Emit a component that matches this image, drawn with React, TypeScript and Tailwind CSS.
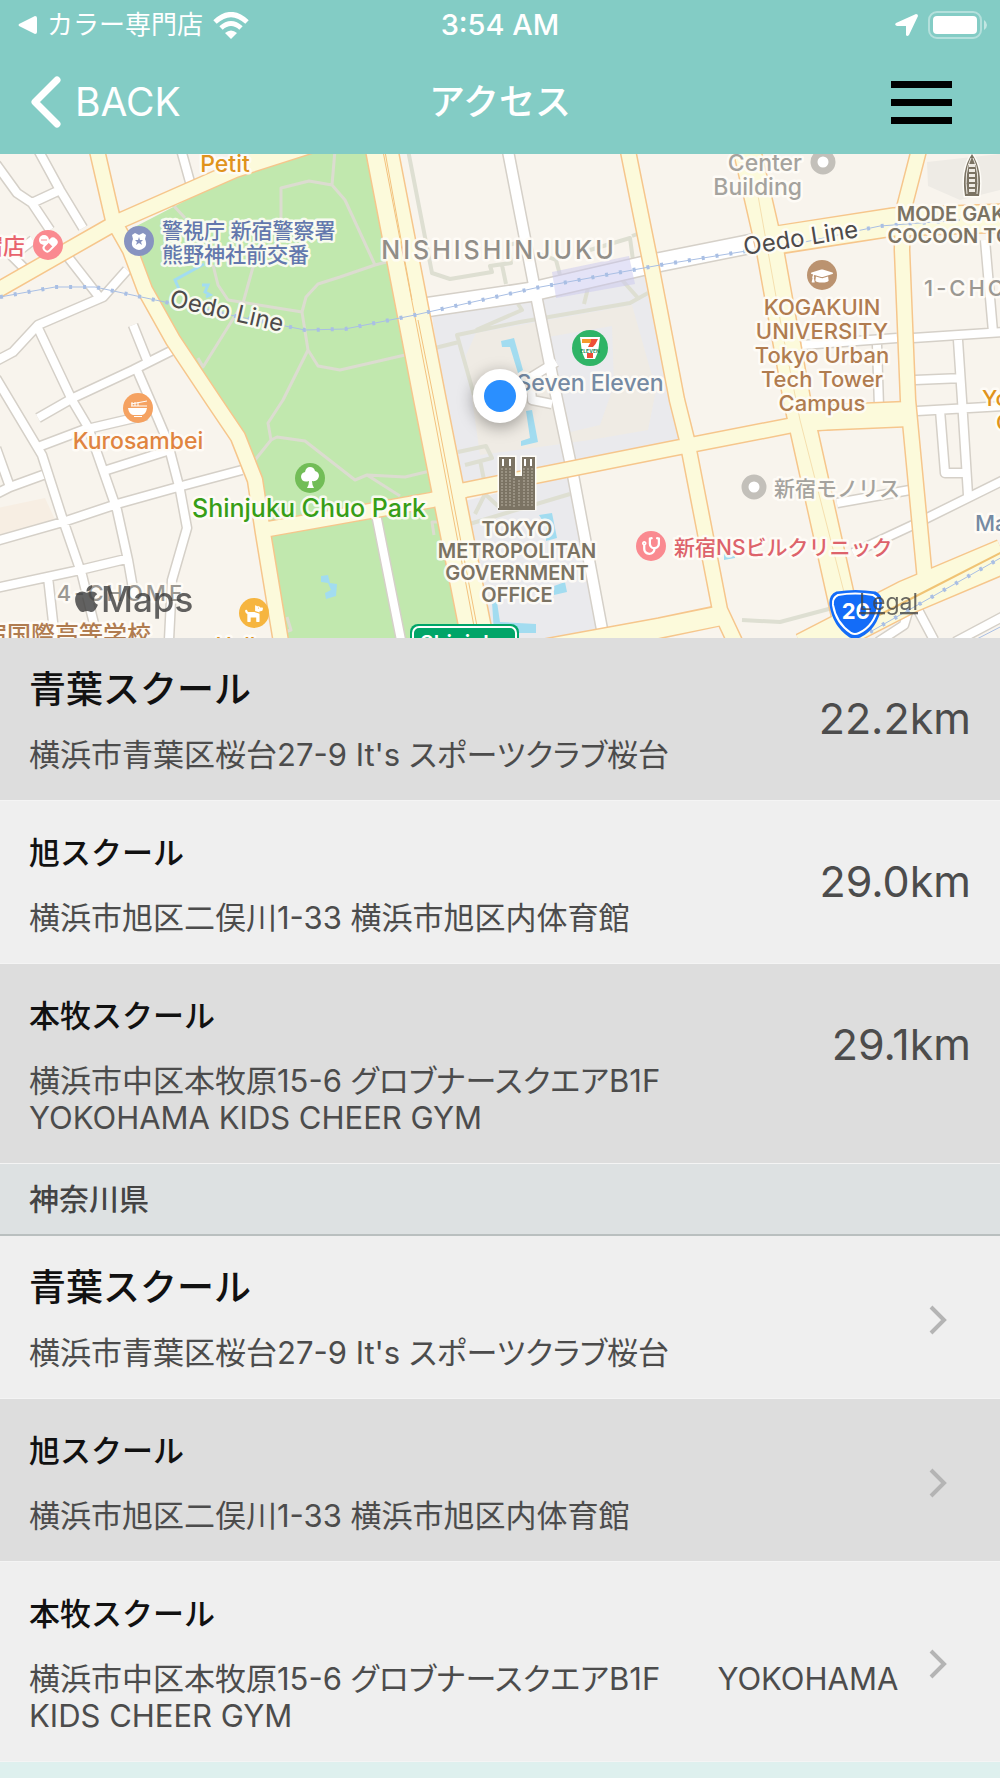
import { FaApple, FaCapsules, FaDog, FaGraduationCap, FaStethoscope } from 'react-icons/fa'
import type { ReactNode } from 'react'

type School = {
  name: string
  address: string
  distance?: string
  large?: boolean
}

const NEARBY: School[] = [
  { name: '青葉スクール', address: "横浜市青葉区桜台27-9 It's スポーツクラブ桜台", distance: '22.2km', large: true },
  { name: '旭スクール', address: '横浜市旭区二俣川1-33 横浜市旭区内体育館', distance: '29.0km' },
  { name: '本牧スクール', address: '横浜市中区本牧原15-6 グロブナースクエアB1F\nYOKOHAMA KIDS CHEER GYM', distance: '29.1km' },
]

const KANAGAWA: School[] = [
  { name: '青葉スクール', address: "横浜市青葉区桜台27-9 It's スポーツクラブ桜台", large: true },
  { name: '旭スクール', address: '横浜市旭区二俣川1-33 横浜市旭区内体育館' },
  { name: '本牧スクール', address: '横浜市中区本牧原15-6 グロブナースクエアB1F\u3000   YOKOHAMA KIDS CHEER GYM' },
]

export default function App() {
  return (
    <div className="min-h-screen bg-[#def0ee] font-[Inter,'Noto_Sans_CJK_JP',sans-serif]">
      <header className="bg-[#83ccc5] text-white">
        <StatusBar />
        <nav className="grid h-[108px] grid-cols-[1fr_auto_1fr] items-center px-[30px] pt-1">
          <button type="button" className="flex items-center gap-[14px] justify-self-start text-[39px] leading-[52px]">
            <svg width="31" height="52" viewBox="0 0 31 52" fill="none" aria-hidden="true">
              <path d="M27 4 L5 26 L27 48" stroke="currentColor" strokeWidth="7" strokeLinecap="round" strokeLinejoin="round" />
            </svg>
            <span>BACK</span>
          </button>
          <h1 className="text-[36px] leading-[52px] font-medium">アクセス</h1>
          <button type="button" aria-label="メニュー" className="mr-[18px] flex flex-col gap-[11px] justify-self-end">
            <span className="h-[7px] w-[61px] bg-black" />
            <span className="h-[7px] w-[61px] bg-black" />
            <span className="h-[7px] w-[61px] bg-black" />
          </button>
        </nav>
      </header>

      <AreaMap />

      <main>
        <ul>
          {NEARBY.map((school, i) => (
            <SchoolRow key={school.name} school={school} dark={i % 2 === 0} />
          ))}
        </ul>
        <h2 className="border-b-2 border-[#b9bfbf] bg-[#dde1e2] px-[29px] py-[15px] text-[30px] leading-10 font-medium text-[#444]">
          神奈川県
        </h2>
        <ul>
          {KANAGAWA.map((school, i) => (
            <SchoolRow key={school.name} school={school} dark={i % 2 === 1} />
          ))}
        </ul>
      </main>
    </div>
  )
}

function StatusBar() {
  return (
    <div className="grid h-[46px] grid-cols-[1fr_auto_1fr] items-center px-3 pt-1">
      <div className="ml-[6px] flex items-center gap-[10px]">
        <svg width="19" height="18" viewBox="0 0 19 18" fill="currentColor" aria-hidden="true">
          <path d="M1 8 Q0 9 1 10 L17 18 Q19 18 19 16 V2 Q19 0 17 0 Z" />
        </svg>
        <span className="text-[26px] leading-9">カラー専門店</span>
        <svg width="36" height="27" viewBox="0 0 36 27" fill="none" stroke="currentColor" aria-hidden="true">
          <path d="M2 10 Q18 -5 34 10" strokeWidth="5" />
          <path d="M8 16 Q18 7 28 16" strokeWidth="5" />
          <path d="M12 21 Q18 16 24 21 L18 27 Z" fill="currentColor" stroke="none" />
        </svg>
      </div>
      <span className="text-[29px] leading-9 font-medium">3:54 AM</span>
      <div className="flex items-center gap-[10px] justify-self-end">
        <svg width="23" height="23" viewBox="0 0 23 23" fill="currentColor" aria-hidden="true">
          <path d="M21 0 Q23 0 23 2 L14 21 Q12 23 11 21 V12 H2 Q-1 11 1 9 Z" />
        </svg>
        <svg width="60" height="28" viewBox="0 0 60 28" aria-hidden="true">
          <rect x="1" y="1" width="52" height="26" rx="8" fill="none" stroke="#fff" strokeWidth="2" opacity=".4" />
          <rect x="5" y="5" width="44" height="18" rx="4" fill="#fff" />
          <path d="M56 9 Q59 11 59 14 Q59 17 56 19 Z" fill="#fff" opacity=".5" />
        </svg>
      </div>
    </div>
  )
}

function SchoolRow({ school, dark }: { school: School; dark: boolean }) {
  return (
    <li className={dark ? 'border-b border-[#f4f4f4] bg-[#ddd]' : 'border-b border-[#f4f4f4] bg-[#efefef]'}>
      <a href="#school" className="flex items-center justify-between px-[29px] pt-8 pb-[27px]">
        <div>
          <h3 className={school.large ? 'text-[37px] leading-10 font-medium text-[#111]' : 'text-[31px] leading-10 font-medium text-[#111]'}>
            {school.name}
          </h3>
          <p className="mt-[26px] text-[31px] leading-[37px] whitespace-pre-wrap text-[#4c4c4c] [font-feature-settings:'palt']">
            {school.address}
          </p>
        </div>
        {school.distance ? (
          <span className="mt-6 self-start text-[43px] leading-12 text-[#4c4c4c]">{school.distance}</span>
        ) : (
          <svg width="18" height="30" viewBox="0 0 18 30" fill="none" className="mr-6 shrink-0" aria-hidden="true">
            <path d="M2 2 L15 15 L2 28" stroke="#b4b4b4" strokeWidth="4" />
          </svg>
        )}
      </a>
    </li>
  )
}

/* ---------- map ---------- */

const STREETS = [
  'M36 146 L60 190 L83 228 M68 257 L100 298',
  'M-4 164 L17 193 L32 203 L60 190 M32 203 L50 230',
  'M33 240 L12 256 L24 268',
  'M127 270 L103 297 L38 325 L13 352 L-4 361',
  'M38 328 L72 400 L88 427 L103 470 L117 510 L128 560 L135 600',
  'M133 325 L147 360 M173 350 L133 370 L73 398 L38 418',
  'M137 370 L150 400 L167 440 L180 490 L187 528 L172 580 L169 640',
  'M-4 378 L42 455 L63 520 L82 575 L98 640',
  'M-4 494 L10 487 L43 475 M-4 448 L10 487',
  'M38 447 L83 430 L147 415 M107 470 L170 450',
  'M-4 541 L63 522 L117 504 L178 487 L242 470',
  'M-4 588 L80 570 L130 558 M48 577 L55 640',
  'M180 146 L190 182',
  'M376 514 L401 640',
  'M985 240 L993 332',
  'M802 345 L897 338 M913 338 L1004 332 M877 345 L879 407',
  'M958 340 L962 400 L968 495 M915 380 L963 378',
  'M917 411 L1004 406 M940 410 L945 473 L970 473',
  'M837 503 L910 490 M853 553 L913 525 L1004 480',
  'M917 608 L934 640 M955 642 L1004 616 M878 642 L904 625 L910 605',
  'M556 362 L530 378 L532 400 L552 404',
]

const WIDE_STREETS = ['M428 307 L530 292 L660 262 L760 242']

const MAIN_STREETS = ['M507 146 L535 290 L555 390 L573 475 L604 640']

const PARK_PATHS = [
  'M173 205 L185 218 M213 265 L218 285 L228 300 L302 312 M253 267 L243 303 L203 367 L198 358',
  'M281 220 L281 188 L309 181 L332 185 L345 200 L375 265 M332 185 L335 150',
  'M340 277 L318 284 L306 297 L302 312 L308 350 L318 366 L340 370 L405 355',
  'M308 350 L283 400 L268 423 L271 440 L255 460 M271 440 L277 437 L305 441 L355 480 L367 475 L400 496 M367 475 L405 477 L430 471',
  'M375 265 L340 277 M375 265 L390 261 M440 522 L432 522 L434 535 M287 617 L291 630 L285 632',
]

const FOOTWAYS = [
  'M408 150 L432 273 L450 279 L492 272 L490 266 L511 263 L508 245 L530 240 M502 265 L506 284',
  'M540 254 L556 260 L560 275 M590 250 L630 238 L633 260 M632 236 L640 233',
  'M435 348 L459 342 L457 335 L520 322 L630 303 L648 293 M459 342 L474 395 M476 330 L522 310 L518 304',
  'M590 280 L584 304 M622 280 L638 298',
  'M458 452 L486 446 L492 458 L465 465 M480 460 L484 480 L460 490 M475 514 L485 494 L500 508 M456 528 L570 494',
  'M742 620 L780 622 L840 606',
]

const MINOR_YELLOW = [
  'M96 146 L113 220 L130 250 L145 290 L173 340 L213 400 L238 437 L255 480 L263 533 L281 642',
  'M-4 291 L117 222 L235 170 L310 146',
  'M263 530 L432 500 L465 490 L670 449 L793 425 L850 420',
  'M627 146 L652 270 L677 400 L687 440 L720 610 L735 642',
  'M920 146 L903 212 L902 250 L908 400 L925 580',
]

function Roads({ lines, color, width }: { lines: string[]; color: string; width: number }) {
  return <path d={lines.join(' ')} fill="none" stroke={color} strokeWidth={width} strokeLinejoin="round" />
}

type LabelProps = {
  x: number
  y: number
  lines: string[]
  color: string
  size?: number
  leading?: number
  anchor?: 'start' | 'middle' | 'end'
  weight?: number
  rotate?: number
}

function Label({ x, y, lines, color, size = 22, leading = 24, anchor = 'middle', weight = 500, rotate = 0 }: LabelProps) {
  return (
    <text
      fill={color}
      stroke="#fffdf8"
      strokeOpacity=".9"
      strokeWidth="5"
      strokeLinejoin="round"
      fontSize={size}
      fontWeight={weight}
      textAnchor={anchor}
      transform={`rotate(${rotate} ${x} ${y})`}
      className="[paint-order:stroke]"
    >
      {lines.map((line, i) => (
        <tspan key={line} x={x} y={y + i * leading}>
          {line}
        </tspan>
      ))}
    </text>
  )
}

function Pin({ x, y, color, children }: { x: number; y: number; color: string; children?: ReactNode }) {
  return (
    <g transform={`translate(${x} ${y})`}>
      <circle r="15" fill={color} />
      {children}
    </g>
  )
}

function AreaMap() {
  return (
    <svg
      viewBox="0 154 1000 484"
      preserveAspectRatio="xMidYMid slice"
      className="block h-[484px] w-full bg-[#f8f4ed]"
      role="group"
      aria-label="現在地周辺の地図"
    >
      {/* land */}
      <path d="M125 232 L233 176 L305 150 L370 150 L415 390 L465 640 H282 L263 533 L255 480 L238 437 L213 400 L150 290 Z" fill="#c1e8ae" />
      <path d="M-2 508 L45 498 L58 526 L-2 538 Z" fill="#f7eee3" />
      <path d="M432 315 L650 275 L690 440 L455 488 Z M460 502 L576 475 L606 640 L490 640 Z" fill="#eaeaed" />
      <path d="M466 355 L476 333 L632 305 L656 390 L648 430 L590 440 L480 455 Z" fill="#efebe4" />
      <path d="M548 337 L612 326 L614 385 L600 425 L562 434 Z" fill="#eaeaed" />
      <path d="M927 162 L1000 154 V190 L960 200 L928 186 Z" fill="#eeebe5" />

      {/* water */}
      <g fill="#a2dcf0">
        <path d="M501 341 L514 338 L523 370 L518 373 L510 347 L502 347 Z" />
        <path d="M526 411 L532 410 L538 442 L521 446 L521 441 L530 438 Z" />
        <path d="M539 515 L552 513 L557 538 L546 541 L546 526 Z M565 582 L567 592 L554 595 L554 586 Z" />
        <path d="M492 602 L497 602 L500 622 L536 624 L536 633 L494 633 Z" />
        <path d="M321 576 L328 575 L330 583 L337 584 L336 596 L326 599 L325 593 L331 590 L328 583 L321 582 Z" />
        <path d="M724 552 L735 553 V558 L724 560 Z" />
      </g>
      <path d="M204 264 L175 280 L179 289 M202 285 L208 285 L205 292 L210 295 L206 297" fill="none" stroke="#a2dcf0" strokeWidth="3" />

      {/* paths and streets */}
      <Roads lines={PARK_PATHS} color="#dcdcd0" width={3} />
      <Roads lines={FOOTWAYS} color="#dedfd2" width={4} />
      <Roads lines={STREETS} color="#d5d0c8" width={11} />
      <Roads lines={MAIN_STREETS} color="#d5d0c8" width={13} />
      <Roads lines={WIDE_STREETS} color="#d5d0c8" width={21} />
      <Roads lines={STREETS} color="#fff" width={8} />
      <Roads lines={MAIN_STREETS} color="#fff" width={10} />
      <Roads lines={WIDE_STREETS} color="#fff" width={18} />
      <path d="M552 272 L629 256 L635 284 L556 298 Z" fill="#c9c8f0" opacity=".5" />

      {/* arterial roads */}
      <g fill="none" stroke="#f6c68c" strokeLinejoin="round">
        <path d={MINOR_YELLOW.join(' ')} strokeWidth="17" />
        <path d="M381 146 L430 400 L478 642" strokeWidth="34" />
        <path d="M746 146 L770 250 L797 400 L851 642" strokeWidth="29" />
        <path d="M778 240 L893 222 L1004 218" strokeWidth="30" />
        <path d="M790 419 L908 414" strokeWidth="27" />
        <path d="M540 650 L660 628 L722 615" strokeWidth="22" />
        <path d="M804 650 L907 597 L1004 556" strokeWidth="36" />
      </g>
      <path d="M205 178 L255 152 H312 L260 166 Z" fill="#fcfadb" />
      <g fill="none" stroke="#fcfadb" strokeLinejoin="round">
        <path d={MINOR_YELLOW.join(' ')} strokeWidth="14" />
        <path d="M381 146 L430 400 L478 642" strokeWidth="31" />
        <path d="M746 146 L770 250 L797 400 L851 642" strokeWidth="26" />
        <path d="M776 240 L893 222 L1004 218" strokeWidth="27" />
        <path d="M788 419 L909 414" strokeWidth="24" />
        <path d="M540 650 L660 628 L724 615" strokeWidth="19" />
        <path d="M804 650 L907 597 L1004 556" strokeWidth="33" />
      </g>
      <path d="M382 146 L431 400 L477 642 M384 146 L412 300 M418 320 L434 400 L480 642" fill="none" stroke="#f3c27e" strokeWidth="1" />
      <path d="M757 190 L782 330 L800 420 L846 600" fill="none" stroke="#f5dfae" strokeWidth="1" />
      <path d="M850 630 L930 589 L1004 551" fill="none" stroke="#f0c374" strokeWidth="2" />

      {/* subway */}
      <g fill="none" stroke="#a9bfe4">
        <path
          d="M0 297 L55 287 L95 287 L160 301 L230 315 L305 330 L345 329 L415 315 L535 288 L660 265 L740 252 L800 243 L880 226 L960 220 M870 632 L1004 556 M975 640 L1004 625"
          strokeWidth="1"
        />
        <path
          d="M0 297 L55 287 L95 287 L160 301 L230 315 L305 330 L345 329 L415 315 L535 288 L660 265 L740 252 L800 243 L880 226 L960 220 M870 632 L1004 556"
          strokeWidth="4"
          strokeDasharray="3 11"
        />
      </g>

      {/* labels */}
      <g>
        <Label x={225} y={172} lines={['Petit']} color="#e0931c" size={23} />
        <Label x={25} y={254} lines={['新宿店']} color="#e8636c" anchor="end" size={22} />
        <Label x={162} y={238} lines={['警視庁 新宿警察署', '熊野神社前交番']} color="#6378ad" anchor="start" size={21} />
        <g letterSpacing="3">
          <Label x={499} y={259} lines={['NISHISHINJUKU']} color="#918e88" size={25} />
          <Label x={924} y={296} lines={['1-CHOME']} color="#9b9892" anchor="start" />
          <Label x={121} y={601} lines={['4-CHOME']} color="#9b9892" />
        </g>
        <Label x={225} y={319} lines={['Oedo Line']} color="#4d4a4a" size={24} weight={400} rotate={13} />
        <Label x={802} y={246} lines={['Oedo Line']} color="#4d4a4a" size={24} weight={400} rotate={-9} />
        <Label x={802} y={171} lines={['Center', 'Building']} color="#a5a39e" anchor="end" size={23} />
        <Label x={972} y={221} lines={['MODE GAKUEN', 'COCOON TOWER']} color="#7b7363" size={20} leading={22} weight={600} />
        <Label x={822} y={315} lines={['KOGAKUIN', 'UNIVERSITY', 'Tokyo Urban', 'Tech Tower', 'Campus']} color="#b07c50" />
        <Label x={590} y={391} lines={['Seven Eleven']} color="#758aa3" size={23} />
        <Label x={138} y={449} lines={['Kurosambei']} color="#e0843f" size={23} />
        <Label x={309} y={517} lines={['Shinjuku Chuo Park']} color="#379e17" size={25} />
        <Label x={517} y={536} lines={['TOKYO', 'METROPOLITAN', 'GOVERNMENT', 'OFFICE']} color="#7b7363" size={20} leading={22} weight={600} />
        <Label x={774} y={496} lines={['新宿モノリス']} color="#a5a39e" anchor="start" size={21} />
        <Label x={674} y={555} lines={['新宿NSビルクリニック']} color="#dd636b" anchor="start" size={21} />
        <Label x={975} y={531} lines={['Manpuku']} color="#758aa3" anchor="start" />
        <Label x={982} y={406} lines={['Yoshinoya']} color="#e0931c" anchor="start" />
        <Label x={996} y={430} lines={['Grill']} color="#e0931c" anchor="start" />
        <Label x={151} y={643} lines={['新宿国際高等学校']} color="#b07c50" anchor="end" size={24} />
        <Label x={242} y={653} lines={['Hallo']} color="#e0931c" />
      </g>

      {/* points of interest */}
      <Pin x={48} y={245} color="#fa8a90">
        <g transform="rotate(45)">
          <rect x="-2" y="-9" width="7" height="15" rx="3" fill="none" stroke="#fff" strokeWidth="2" />
          <path d="M-2 -2 H5 V-6 Q5 -9 2 -9 Q-2 -9 -2 -6 Z" fill="#fff" />
        </g>
        <circle cx="-4" cy="-5" r="5" fill="#fff" />
        <path d="M-7 -5 H-1" stroke="#fa8a90" strokeWidth="1" />
      </Pin>
      <Pin x={139} y={241} color="#8793c0">
        <path d="M-7 -6 L-4 -8 L0 -6 L4 -8 L7 -6 L6 -2 Q10 7 0 9 Q-10 7 -6 -2 Z" fill="#fff" />
        <path d="M0 -4 L1 -1 H4 L2 1 L3 4 L0 2 L-3 4 L-2 1 L-4 -1 H-1 Z" fill="#8793c0" />
      </Pin>
      <Pin x={138} y={408} color="#f5a261">
        <path d="M-10 0 H9 Q8 6 4 7 H-5 Q-9 6 -10 0 Z M-4 8 H4 V9 H-4 Z" fill="#fff" />
        <path d="M-7 -4 L9 -7 M-7 -2 H9 M-6 -6 V-2 M-3 -6 V-2 M0 -6 V-2" stroke="#fff" strokeWidth="1" />
      </Pin>
      <Pin x={310} y={478} color="#72bd57">
        <path d="M-3 10 Q-1 7 -1 3 Q-8 5 -9 -1 Q-9 -5 -5 -6 Q-4 -11 0 -11 Q4 -11 5 -7 Q9 -6 9 -2 Q8 4 2 3 Q2 7 4 10 Z" fill="#fff" />
      </Pin>
      <Pin x={254} y={613} color="#f6b53f">
        <FaDog x={-10} y={-10} size={20} color="#fff" />
      </Pin>
      <Pin x={822} y={275} color="#bb9370">
        <FaGraduationCap x={-11} y={-10} size={22} color="#fff" />
      </Pin>
      <Pin x={651} y={546} color="#fa8a90">
        <g transform="scale(-1 1)">
          <FaStethoscope x={-9} y={-9} size={18} color="#fff" />
        </g>
      </Pin>
      <g fill="#fff" stroke="#c3c0ba" strokeWidth="7">
        <circle cx="823" cy="162" r="9" />
        <circle cx="754" cy="487" r="9" />
      </g>
      <circle cx="590" cy="348" r="18" fill="#2fb466" />
      <path d="M580 337 H600 L598 352 L595 359 H585 L582 352 Z" fill="#fff" />
      <path d="M582 339 H592 V343 H582 Z" fill="#f49a2b" />
      <path d="M591 339 H598 Q596 344 593 347 H588 Q589 344 591 342 Z M587 353 H593 V358 H587 Z" fill="#ee4f37" />
      <text x="590" y="353" fontSize="5" fontWeight="700" textAnchor="middle" fill="#168c54">ELEVEN</text>

      {/* landmark buildings */}
      <path d="M499 457 H515 V476 H522 V457 H535 V509 H499 Z" fill="#7b7363" stroke="#fffdf8" strokeWidth="3" className="[paint-order:stroke]" />
      <path d="M498 509 H535" stroke="#7b7363" strokeWidth="2" />
      <path d="M502 468 V507 M506 468 V507 M510 468 V507 M514 478 V507 M519 480 V507 M524 468 V507 M528 468 V507 M532 468 V507" stroke="#b8b1a2" strokeWidth="1" strokeDasharray="2 1" />
      <path d="M503 459 V466 M510 459 V466 M525 459 V466 M531 459 V466" stroke="#fff" strokeWidth="2" />
      <path d="M965 196 Q961 170 972 154 Q983 170 979 196 Z" fill="#7b7363" stroke="#fffdf8" strokeWidth="3" className="[paint-order:stroke]" />
      <path d="M972 164 V194" stroke="#efebe4" strokeWidth="6" strokeDasharray="3 2" />
      <path d="M967 194 Q964 172 971 158 M977 194 Q980 172 973 158" fill="none" stroke="#efebe4" strokeWidth="1" />

      {/* route shields */}
      <rect x="410" y="624" width="109" height="40" rx="8" fill="#00a568" />
      <rect x="413" y="627" width="103" height="40" rx="6" fill="none" stroke="#fff" strokeWidth="2" />
      <text x="464" y="651" fontSize="21" fontWeight="600" textAnchor="middle" fill="#fff">Shinjuku</text>
      <path d="M837 593 Q855 590 875 593 Q882 596 880 607 Q876 628 860 636 Q855 638 850 636 Q834 625 831 605 Q830 596 837 593 Z" fill="#136cf8" stroke="#136cf8" strokeWidth="3" />
      <path d="M838 595 Q855 592 873 595 Q880 598 878 607 Q874 626 859 633 Q855 635 851 633 Q836 623 833 605 Q832 598 838 595 Z" fill="none" stroke="#fff" strokeWidth="2" />
      <text x="856" y="619" fontSize="22" fontWeight="700" textAnchor="middle" fill="#fff">20</text>

      {/* map attribution */}
      <g fill="#3c3c3c" opacity=".8">
        <FaApple x={71} y={583} size={31} color="#3c3c3c" />
        <text x="101" y="612" fontSize="35" fontWeight="500">Maps</text>
      </g>
      <a href="#legal">
        <text x="859" y="610" fontSize="23" fill="#444" opacity=".8" textDecoration="underline">Legal</text>
      </a>

      {/* current location */}
      <circle cx="500" cy="396" r="27" fill="#fff" className="drop-shadow-[0_4px_8px_rgba(0,0,0,0.35)]" />
      <circle cx="500" cy="396" r="16" fill="#2a8fff" />
    </svg>
  )
}
